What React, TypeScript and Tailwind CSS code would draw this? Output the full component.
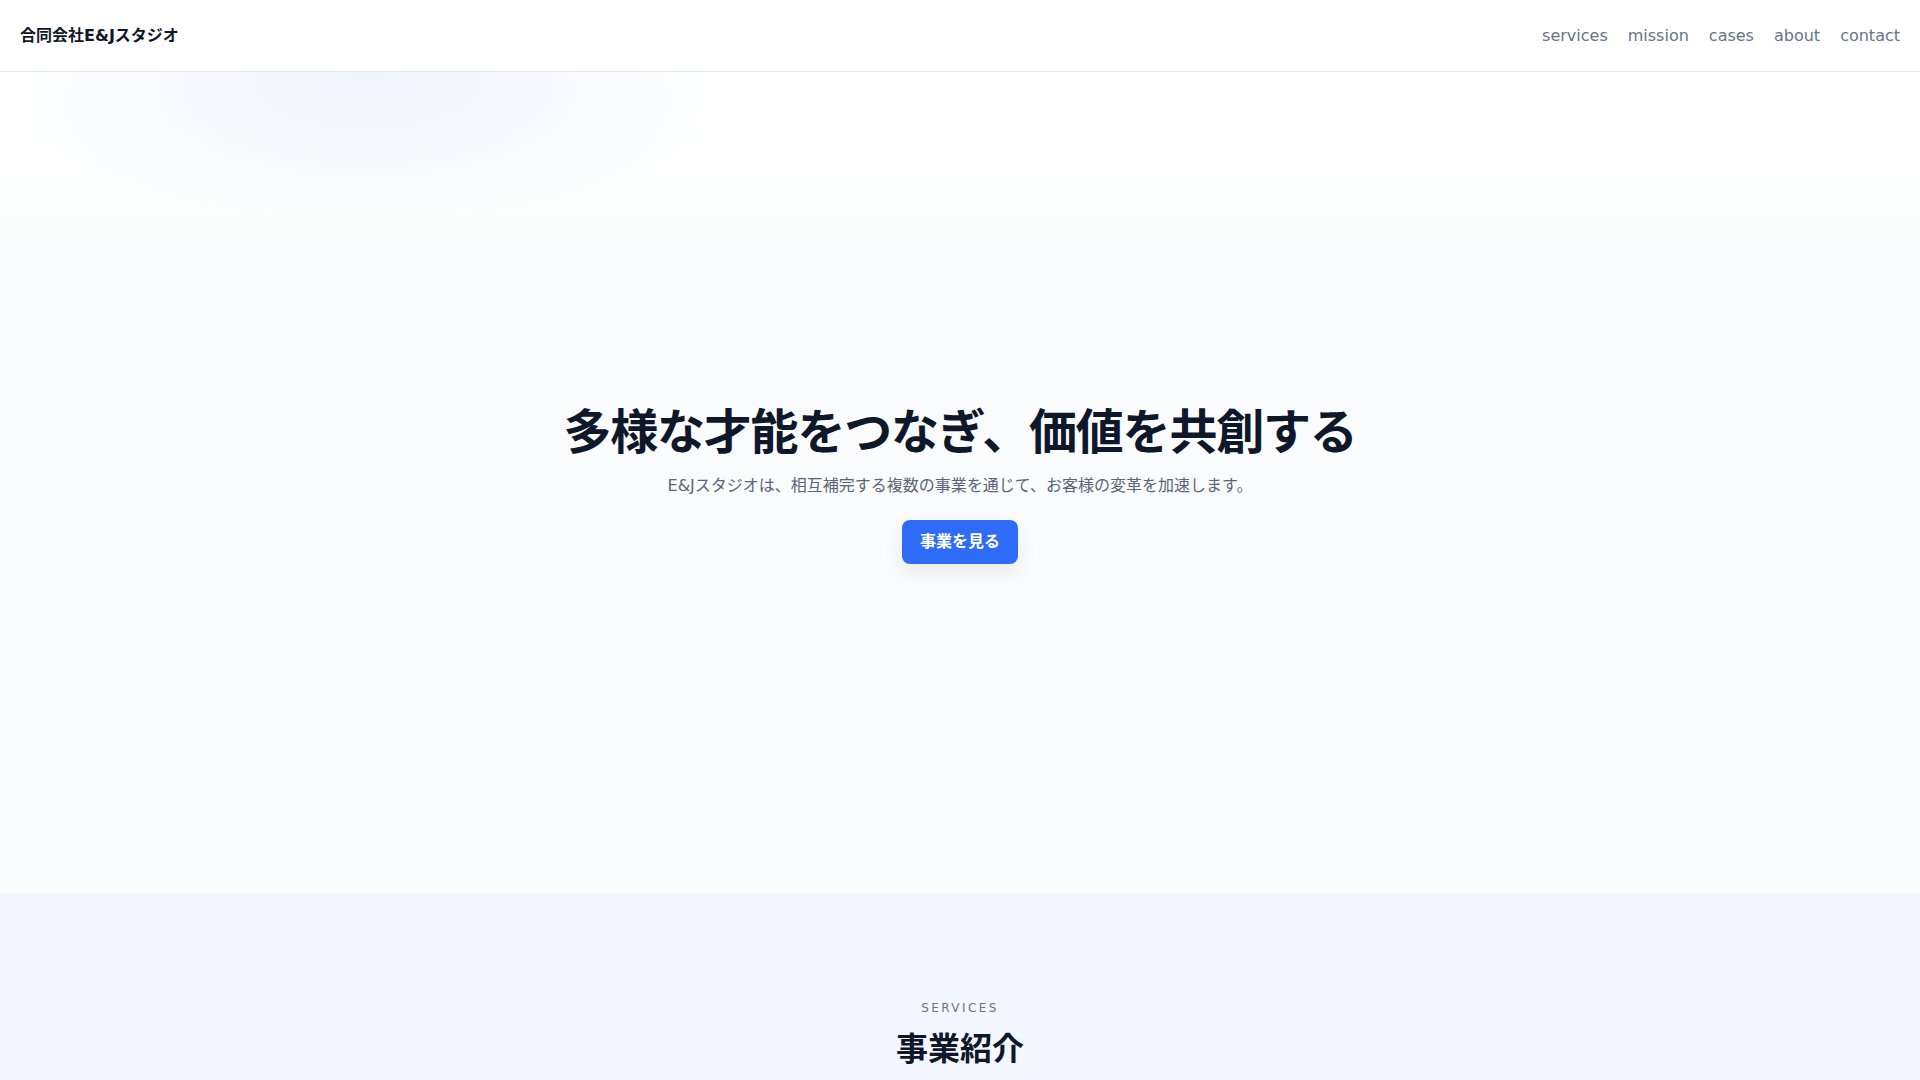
import React from 'react'

const navItems = ['services', 'mission', 'cases', 'about', 'contact']

function Header() {
  return (
    <header className="h-[72px] bg-white border-b border-[#e3e7ee] flex items-center justify-between px-5">
      <div className="text-base font-bold text-[#0f172a]">合同会社E&amp;Jスタジオ</div>
      <nav className="flex items-center gap-5">
        {navItems.map((item) => (
          <a key={item} href={`#${item}`} className="text-base text-[#64748b]">
            {item}
          </a>
        ))}
      </nav>
    </header>
  )
}

function Hero() {
  return (
    <section className="relative h-[821px] flex items-center justify-center bg-[radial-gradient(ellipse_380px_150px_at_367px_0px,rgba(59,110,240,0.07),rgba(59,110,240,0)_100%),linear-gradient(to_bottom,#ffffff_0%,#fafbfc_30%,#fbfcfd_100%)]">
      <div className="flex flex-col items-center text-center">
        <h1 className="text-5xl leading-[60px] font-bold tracking-tight text-[#0f172a]">
          多様な才能をつなぎ、価値を共創する
        </h1>
        <p className="mt-3 text-base leading-6 text-[#5b6577]">
          E&amp;Jスタジオは、相互補完する複数の事業を通じて、お客様の変革を加速します。
        </p>
        <a
          href="#services"
          className="mt-[22px] h-11 px-[18px] flex items-center rounded-lg bg-[#2e6bf6] text-base font-bold text-white shadow-[0_8px_20px_rgba(15,23,42,0.08)]"
        >
          事業を見る
        </a>
      </div>
    </section>
  )
}

function Services() {
  return (
    <section id="services" className="bg-[#f4f7ff] pt-[107px] pb-24 flex flex-col items-center">
      <div className="text-xs leading-4 tracking-[0.2em] text-[#64748b]">SERVICES</div>
      <h2 className="mt-[13px] text-[32px] leading-[40px] font-bold text-[#0f172a]">事業紹介</h2>
    </section>
  )
}

export default function App() {
  return (
    <div className="min-h-screen bg-white font-['DejaVu_Sans','Noto_Sans_CJK_JP',sans-serif]">
      <Header />
      <Hero />
      <Services />
    </div>
  )
}
